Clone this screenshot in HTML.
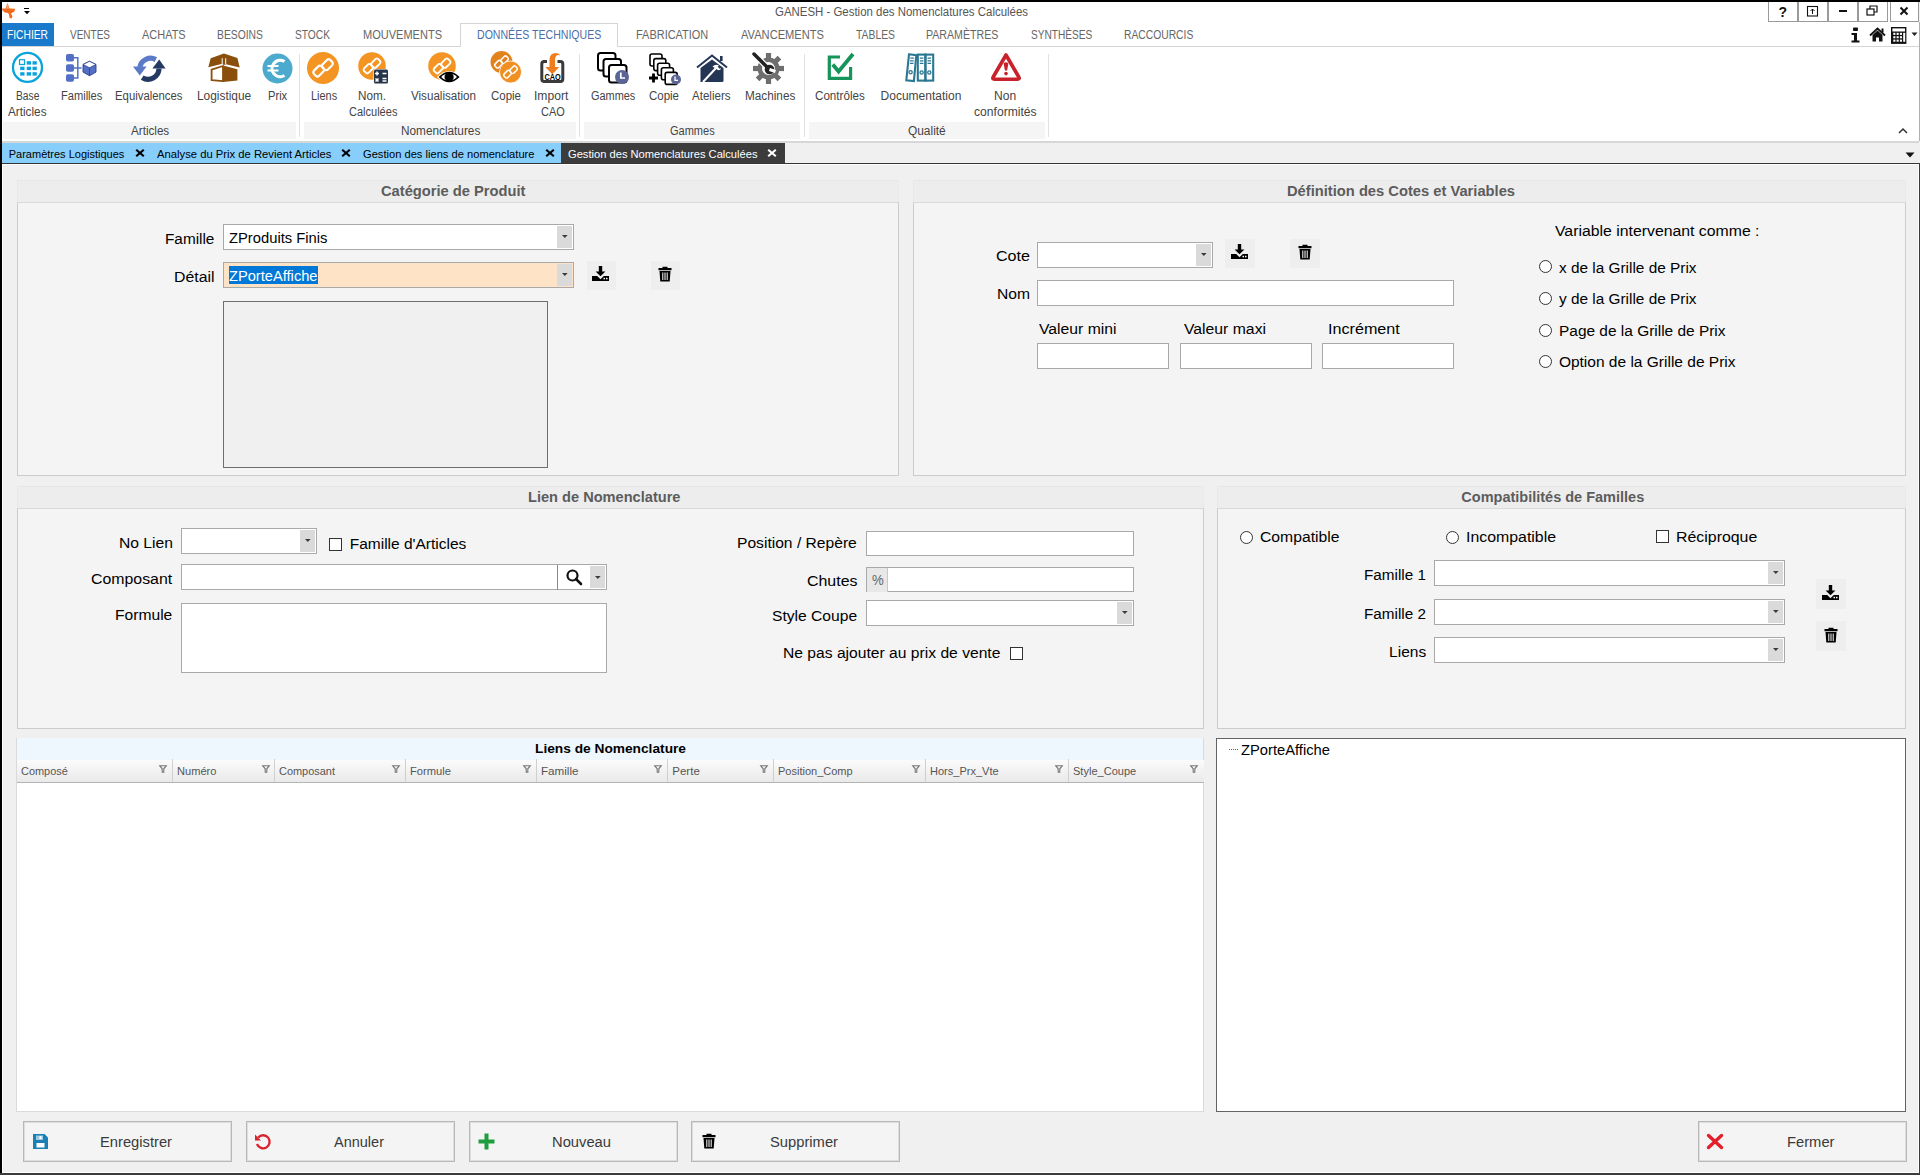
<!DOCTYPE html>
<html><head><meta charset="utf-8">
<style>
*{box-sizing:border-box;margin:0;padding:0}
html,body{width:1920px;height:1175px;overflow:hidden;background:#f0f0f0;font-family:"Liberation Sans",sans-serif;position:relative}
.a{position:absolute}
svg.a{overflow:visible}
.t{position:absolute;white-space:nowrap;line-height:1;transform-origin:0 0}
</style></head><body>
<div class="a" style="left:0px;top:0px;width:1920px;height:2px;background:#000"></div>
<div class="a" style="left:0px;top:0px;width:2px;height:1175px;background:#000"></div>
<div class="a" style="left:2px;top:2px;width:1917px;height:139px;background:#fff"></div>
<svg class="a" style="left:2px;top:3px" width="14" height="16" viewBox="0 0 14 16"><path d="M5.5 0L7.5 5.5L13 5.8L12.5 8.5L9 10.2L10.5 13.5L9.5 15.5L7.5 15L7 11.5L6 10L3 9.5L0.5 7.5L0 5.5L3.5 5.5z" fill="#f26a1b"/><path d="M5.5 0.3L7 5.5L4 5.5z" fill="#f5a877"/></svg>
<div class="a" style="left:24px;top:8px;width:5px;height:1.3px;background:#000"></div>
<svg class="a" style="left:23.5px;top:10.8px" width="6" height="3.5" viewBox="0 0 6 3.5"><path d="M0 0h6L3 3.3z" fill="#000"/></svg>
<div class="t" style="left:775.00px;top:5.54px;font-size:12px;color:#555;font-weight:normal;letter-spacing:0px;transform:scaleX(0.9531);">GANESH - Gestion des Nomenclatures Calculées</div>
<div class="a" style="left:1768px;top:2px;width:30px;height:20px;border:1px solid #9a9a9a;border-top:none;background:#fff"></div>
<div class="a" style="left:1798px;top:2px;width:30px;height:20px;border:1px solid #9a9a9a;border-top:none;background:#fff"></div>
<div class="a" style="left:1828px;top:2px;width:30px;height:20px;border:1px solid #9a9a9a;border-top:none;background:#fff"></div>
<div class="a" style="left:1858px;top:2px;width:30px;height:20px;border:1px solid #9a9a9a;border-top:none;background:#fff"></div>
<div class="a" style="left:1890px;top:2px;width:29px;height:20px;border:1px solid #9a9a9a;border-top:none;background:#fff"></div>
<div class="t" style="left:1778.50px;top:4.65px;font-size:14px;color:#111;font-weight:bold;letter-spacing:0px;">?</div>
<svg class="a" style="left:1806px;top:5px" width="14" height="13" viewBox="0 0 14 13"><rect x="1.5" y="1.5" width="10" height="9.5" fill="none" stroke="#111" stroke-width="1.1"/><path d="M6.5 9V4M4.5 6l2-2 2 2" fill="none" stroke="#111" stroke-width="1"/></svg>
<div class="a" style="left:1839px;top:10px;width:8px;height:2px;background:#111"></div>
<svg class="a" style="left:1866px;top:5px" width="14" height="12" viewBox="0 0 14 12"><rect x="1" y="4" width="7" height="6" fill="#fff" stroke="#111" stroke-width="1.2"/><path d="M4 4V1h7v6H8" fill="none" stroke="#111" stroke-width="1.2"/></svg>
<svg class="a" style="left:1899px;top:6px" width="10" height="10" viewBox="0 0 10 10"><path d="M1.5 1.5l7 7M8.5 1.5l-7 7" stroke="#111" stroke-width="2"/></svg>
<div class="a" style="left:2px;top:23px;width:52px;height:23px;background:#1979ca"></div>
<div class="t" style="left:7.30px;top:28.64px;font-size:12px;color:#fff;font-weight:normal;letter-spacing:0px;transform:scaleX(0.8542);">FICHIER</div>
<div class="a" style="left:460px;top:23px;width:158px;height:24px;border:1px solid #d5d5d5;border-bottom:none;background:#fff"></div>
<div class="a" style="left:2px;top:46px;width:458px;height:1px;background:#d5d5d5"></div>
<div class="a" style="left:617px;top:46px;width:1302px;height:1px;background:#d5d5d5"></div>
<div class="t" style="left:70.00px;top:28.64px;font-size:12px;color:#666;font-weight:normal;letter-spacing:0px;transform:scaleX(0.8331);">VENTES</div>
<div class="t" style="left:142.30px;top:28.64px;font-size:12px;color:#666;font-weight:normal;letter-spacing:0px;transform:scaleX(0.9143);">ACHATS</div>
<div class="t" style="left:217.30px;top:28.64px;font-size:12px;color:#666;font-weight:normal;letter-spacing:0px;transform:scaleX(0.8621);">BESOINS</div>
<div class="t" style="left:295.00px;top:28.64px;font-size:12px;color:#666;font-weight:normal;letter-spacing:0px;transform:scaleX(0.8511);">STOCK</div>
<div class="t" style="left:363.30px;top:28.64px;font-size:12px;color:#666;font-weight:normal;letter-spacing:0px;transform:scaleX(0.9184);">MOUVEMENTS</div>
<div class="t" style="left:476.70px;top:28.64px;font-size:12px;color:#4a6ea8;font-weight:normal;letter-spacing:0px;transform:scaleX(0.8807);">DONNÉES TECHNIQUES</div>
<div class="t" style="left:636.00px;top:28.64px;font-size:12px;color:#666;font-weight:normal;letter-spacing:0px;transform:scaleX(0.9137);">FABRICATION</div>
<div class="t" style="left:741.00px;top:28.64px;font-size:12px;color:#666;font-weight:normal;letter-spacing:0px;transform:scaleX(0.9266);">AVANCEMENTS</div>
<div class="t" style="left:856.00px;top:28.64px;font-size:12px;color:#666;font-weight:normal;letter-spacing:0px;transform:scaleX(0.8640);">TABLES</div>
<div class="t" style="left:926.00px;top:28.64px;font-size:12px;color:#666;font-weight:normal;letter-spacing:0px;transform:scaleX(0.8839);">PARAMÈTRES</div>
<div class="t" style="left:1031.00px;top:28.64px;font-size:12px;color:#666;font-weight:normal;letter-spacing:0px;transform:scaleX(0.8433);">SYNTHÈSES</div>
<div class="t" style="left:1124.00px;top:28.64px;font-size:12px;color:#666;font-weight:normal;letter-spacing:0px;transform:scaleX(0.8590);">RACCOURCIS</div>
<svg class="a" style="left:1851px;top:27px" width="9" height="16" viewBox="0 0 9 16"><rect x="2" y="0.5" width="5" height="3.5" rx="1" fill="#111"/><path d="M0.5 6h5.5v7.5h2.5v2H0.5v-2h2.5V8H0.5z" fill="#111"/></svg>
<svg class="a" style="left:1869px;top:27px" width="17" height="15" viewBox="0 0 17 15"><path d="M1 8.5L8.5 1.5 16 8.5" fill="none" stroke="#111" stroke-width="1.8"/><path d="M3.5 8v6.5h3.5v-4h3v4h3.5V8L8.5 3.5z" fill="#111"/><rect x="12.5" y="1.5" width="2" height="4" fill="#111"/></svg>
<svg class="a" style="left:1891px;top:27px" width="16" height="17" viewBox="0 0 16 17"><rect x="0.7" y="0.7" width="14" height="15.5" fill="#fff" stroke="#111" stroke-width="1.4"/><rect x="1" y="4.5" width="13.6" height="11.5" fill="#111"/><rect x="2.3" y="5.8" width="2.1" height="2.1" fill="#fff"/><rect x="5.6" y="5.8" width="2.1" height="2.1" fill="#fff"/><rect x="8.899999999999999" y="5.8" width="2.1" height="2.1" fill="#fff"/><rect x="2.3" y="9.2" width="2.1" height="2.1" fill="#fff"/><rect x="5.6" y="9.2" width="2.1" height="2.1" fill="#fff"/><rect x="8.899999999999999" y="9.2" width="2.1" height="2.1" fill="#fff"/><rect x="2.3" y="12.6" width="2.1" height="2.1" fill="#fff"/><rect x="5.6" y="12.6" width="2.1" height="2.1" fill="#fff"/><rect x="8.899999999999999" y="12.6" width="2.1" height="2.1" fill="#fff"/><rect x="12.2" y="5.8" width="2" height="9" fill="#fff"/></svg>
<svg class="a" style="left:1911px;top:32px" width="7" height="5" viewBox="0 0 7 5"><path d="M0.5 0.5h6L3.5 4z" fill="#222"/></svg>
<svg class="a" style="left:12px;top:52px" width="31" height="31" viewBox="0 0 31 31"><circle cx="15.5" cy="15.4" r="14.5" fill="none" stroke="#0aa3dc" stroke-width="2.3"/><rect x="7.5" y="7.7" width="5" height="4.8" fill="none" stroke="#0aa3dc" stroke-width="1.2"/><rect x="14.7" y="9.2" width="4.3" height="3.4" fill="#0aa3dc"/><rect x="20.5" y="9.2" width="4.3" height="3.4" fill="#0aa3dc"/><rect x="8.2" y="14.7" width="4.3" height="3.4" fill="#0aa3dc"/><rect x="14.7" y="14.7" width="4.3" height="3.4" fill="#0aa3dc"/><rect x="20.5" y="14.7" width="4.3" height="3.4" fill="#0aa3dc"/><rect x="8.2" y="20.2" width="4.3" height="3.4" fill="#0aa3dc"/><rect x="14.7" y="20.2" width="4.3" height="3.4" fill="#0aa3dc"/><rect x="20.5" y="20.2" width="4.3" height="3.4" fill="#0aa3dc"/></svg>
<svg class="a" style="left:66px;top:54px" width="31" height="29" viewBox="0 0 31 29"><rect x="0" y="0" width="8" height="7.5" rx="1.8" fill="#5370c6"/><rect x="0" y="10.2" width="8" height="7.5" rx="1.8" fill="#5370c6"/><rect x="0" y="20.2" width="8" height="7.5" rx="1.8" fill="#5370c6"/><path d="M8 3.8h3.8v20.2H8M8 14h7.5" fill="none" stroke="#5370c6" stroke-width="1.5"/><path d="M17 10.5l6.5-3.2 6.5 3.2v7.6l-6.5 3.6-6.5-3.6z" fill="#5370c6" stroke="#2a3f8a" stroke-width="0.9"/><path d="M17 10.5l6.5 3.3 6.5-3.3-6.5-3.2z" fill="#fff" stroke="#2a3f8a" stroke-width="0.8"/><path d="M23.5 13.8v7.9" stroke="#2a3f8a" stroke-width="0.8"/></svg>
<svg class="a" style="left:133px;top:56px" width="34" height="27" viewBox="0 0 34 27"><path d="M22.8 3.6A11 11 0 0 0 6.8 11" fill="none" stroke="#5b7bc8" stroke-width="5.2"/><path d="M0 10.4h13.6L6.8 19.6z" fill="#5b7bc8"/><path d="M9.2 21.6A11 11 0 0 0 26 12.5" fill="none" stroke="#243a63" stroke-width="5.2"/><path d="M19.4 12.6h13.2L26.2 3.4z" fill="#243a63"/></svg>
<svg class="a" style="left:204px;top:50px" width="40" height="36" viewBox="0 0 40 36"><path d="M4.3 17.3L6.7 8.3 19.9 3.4 33.4 8 35.7 17.6 22 14.2 21.5 14.8H19L18.4 13.8z" fill="#8a4f0c"/><path d="M18.2 8.2v6M21.7 8.2v6.2" stroke="#fff" stroke-width="1"/><path d="M7.6 19.6L19 16v15.2L7.6 30.2z" fill="#fff" stroke="#8a4f0c" stroke-width="1.8" stroke-linejoin="round"/><path d="M19 15.5L33.4 19.3v11.3L19 32z" fill="#8a4f0c"/></svg>
<svg class="a" style="left:262px;top:53px" width="31" height="31" viewBox="0 0 31 31"><circle cx="15.5" cy="15.5" r="15" fill="#4baacd"/><path d="M22.5 8.5A8.2 8.2 0 1 0 22.5 22.5" fill="none" stroke="#fff" stroke-width="3.2"/><path d="M5.5 13h11M5.5 17.5h11" stroke="#fff" stroke-width="2"/></svg>
<svg class="a" style="left:307px;top:52px" width="32" height="32" viewBox="0 0 32 32"><circle cx="16" cy="16" r="16" fill="#f39423"/><g transform="translate(16,16) rotate(-45) scale(1.0)"><rect x="-10.6" y="-4.5" width="10.8" height="7.3" rx="2.4" fill="none" stroke="#fff" stroke-width="2.2"/><rect x="0" y="-2.8" width="10.8" height="7.3" rx="2.4" fill="none" stroke="#fff" stroke-width="2.2"/></g></svg>
<svg class="a" style="left:358px;top:52px" width="31" height="32" viewBox="0 0 31 32"><circle cx="14" cy="14" r="13.8" fill="#f39423"/><g transform="translate(14,14) rotate(-45) scale(0.86)"><rect x="-10.6" y="-4.5" width="10.8" height="7.3" rx="2.4" fill="none" stroke="#fff" stroke-width="2.2"/><rect x="0" y="-2.8" width="10.8" height="7.3" rx="2.4" fill="none" stroke="#fff" stroke-width="2.2"/></g><rect x="15.5" y="17" width="15" height="15" rx="1.5" fill="#fff"/><rect x="16" y="17.5" width="14" height="14" rx="1.5" fill="#273449"/><path d="M17 21.5h4M19 19.5v4M24.5 21.5h4M17.5 26.5l3 3M20.5 26.5l-3 3M24.5 26.5h4M24.5 29h4" stroke="#fff" stroke-width="1.5"/></svg>
<svg class="a" style="left:428px;top:52px" width="32" height="32" viewBox="0 0 32 32"><circle cx="14" cy="14" r="13.8" fill="#f39423"/><g transform="translate(14,14) rotate(-45) scale(0.86)"><rect x="-10.6" y="-4.5" width="10.8" height="7.3" rx="2.4" fill="none" stroke="#fff" stroke-width="2.2"/><rect x="0" y="-2.8" width="10.8" height="7.3" rx="2.4" fill="none" stroke="#fff" stroke-width="2.2"/></g><path d="M9 25Q21.1 13 33.2 25Q21.1 37 9 25z" fill="#fff"/><path d="M10.6 25Q21.1 14.5 31.6 25Q21.1 35.5 10.6 25z" fill="#000"/><path d="M13.2 25Q21.1 17.5 29 25Q21.1 32.5 13.2 25z" fill="#fff"/><circle cx="21.1" cy="25" r="4.6" fill="#000"/></svg>
<svg class="a" style="left:490px;top:51px" width="32" height="33" viewBox="0 0 32 33"><circle cx="11.5" cy="11" r="11" fill="#e2841e"/><g transform="translate(11.5,11) rotate(-45) scale(0.7)"><rect x="-10.6" y="-4.5" width="10.8" height="7.3" rx="2.4" fill="none" stroke="#fff" stroke-width="2.2"/><rect x="0" y="-2.8" width="10.8" height="7.3" rx="2.4" fill="none" stroke="#fff" stroke-width="2.2"/></g><circle cx="20.5" cy="21" r="11" fill="#f08f22" stroke="#fff" stroke-width="0.8"/><g transform="translate(20.5,21) rotate(-45) scale(0.7)"><rect x="-10.6" y="-4.5" width="10.8" height="7.3" rx="2.4" fill="none" stroke="#fff" stroke-width="2.2"/><rect x="0" y="-2.8" width="10.8" height="7.3" rx="2.4" fill="none" stroke="#fff" stroke-width="2.2"/></g></svg>
<svg class="a" style="left:538px;top:52px" width="28" height="33" viewBox="0 0 28 33"><path d="M9 9.5H6.3Q3.8 9.5 3.8 12v15q0 2.5 2.5 2.5h16q2.5 0 2.5-2.5V12q0-2.5-2.5-2.5H19.5" fill="none" stroke="#3a3a3a" stroke-width="3"/><path d="M11.5 15V8Q11.5 1 18 1Q21 1 22.5 3.5Q20.5 2.5 18.5 3.5Q17 4.5 17 8V15h4.2L14.3 22.2 7.3 15z" fill="#f07d1e"/><text x="14.6" y="28.2" font-family="Liberation Sans" font-weight="bold" font-size="8.6" text-anchor="middle" fill="#000" textLength="16.3" lengthAdjust="spacingAndGlyphs">CAO</text></svg>
<svg class="a" style="left:597px;top:52px" width="33" height="33" viewBox="0 0 33 33"><rect x="1.0" y="1" width="17.5" height="17.5" rx="2.5" fill="#fff" stroke="#000" stroke-width="2"/><rect x="6.5" y="7" width="17.5" height="17.5" rx="2.5" fill="#fff" stroke="#000" stroke-width="2"/><rect x="12.0" y="13" width="17.5" height="17.5" rx="2.5" fill="#fff" stroke="#000" stroke-width="2"/><circle cx="25" cy="25" r="7" fill="#5a6596"/><path d="M23.8 20.5v5.5h4.2" fill="none" stroke="#fff" stroke-width="1.7"/></svg>
<svg class="a" style="left:649px;top:53px" width="33" height="31" viewBox="0 0 33 31"><rect x="1.0" y="1.0" width="12" height="12" rx="2" fill="#fff" stroke="#000" stroke-width="1.6"/><rect x="4.8" y="5.6" width="12" height="12" rx="2" fill="#fff" stroke="#000" stroke-width="1.6"/><rect x="8.6" y="10.2" width="12" height="12" rx="2" fill="#fff" stroke="#000" stroke-width="1.6"/><rect x="12.399999999999999" y="14.799999999999999" width="12" height="12" rx="2" fill="#fff" stroke="#000" stroke-width="1.6"/><rect x="16.2" y="19.4" width="12" height="12" rx="2" fill="#fff" stroke="#000" stroke-width="1.6"/><circle cx="27" cy="26.5" r="5" fill="#5a6596"/><path d="M26 23.5v3.8h3" fill="none" stroke="#fff" stroke-width="1.3"/><path d="M4.5 20.5v9M0 25h9" stroke="#000" stroke-width="2.8"/></svg>
<svg class="a" style="left:696px;top:54px" width="32" height="28" viewBox="0 0 32 28"><path d="M1 13.5L16 1.5 31 13.5" fill="none" stroke="#253654" stroke-width="2"/><rect x="24" y="2" width="2.6" height="5" fill="#253654"/><path d="M4.5 14L16 5.5 27.5 14v12.5q0 1.5-1.5 1.5H4.5z" fill="#253654"/><path d="M7 28L20 14" stroke="#fff" stroke-width="2"/><path d="M16.5 12.5q3-3 6.5-1l-1.3 1.3 2 2 1.5-1q-0.5 2.5-3 2.5" fill="#fff"/></svg>
<svg class="a" style="left:751px;top:51px" width="35" height="35" viewBox="0 0 35 35"><g transform="translate(17.5,17.5)"><rect x="-2.6" y="-15.5" width="5.2" height="6" fill="#6e6e6e" transform="rotate(0)"/><rect x="-2.6" y="-15.5" width="5.2" height="6" fill="#6e6e6e" transform="rotate(45)"/><rect x="-2.6" y="-15.5" width="5.2" height="6" fill="#6e6e6e" transform="rotate(90)"/><rect x="-2.6" y="-15.5" width="5.2" height="6" fill="#6e6e6e" transform="rotate(135)"/><rect x="-2.6" y="-15.5" width="5.2" height="6" fill="#6e6e6e" transform="rotate(180)"/><rect x="-2.6" y="-15.5" width="5.2" height="6" fill="#6e6e6e" transform="rotate(225)"/><rect x="-2.6" y="-15.5" width="5.2" height="6" fill="#6e6e6e" transform="rotate(270)"/><rect x="-2.6" y="-15.5" width="5.2" height="6" fill="#6e6e6e" transform="rotate(315)"/><circle r="11" fill="#6e6e6e"/><circle r="6.5" fill="#fff"/></g><path d="M3 3L17.5 17.5" stroke="#fff" stroke-width="6"/><path d="M3 3L16.5 16.5" stroke="#222" stroke-width="3.5" stroke-linecap="round"/><circle cx="18.5" cy="18.5" r="4.8" fill="#222"/><path d="M18.5 18.5l6 2" stroke="#fff" stroke-width="3"/></svg>
<svg class="a" style="left:827px;top:53px" width="28" height="29" viewBox="0 0 28 29"><path d="M13 4H2.3v21.3h21.3V14" fill="none" stroke="#16955a" stroke-width="3.2"/><path d="M5.8 11.5l5.8 7L26 1" fill="none" stroke="#16955a" stroke-width="3.8"/></svg>
<svg class="a" style="left:905px;top:53px" width="32" height="30" viewBox="0 0 32 30"><g fill="none" stroke="#2a7792" stroke-width="2.1"><path d="M4 1.3l7.3 0.9-2.4 25.8L1.3 27.2z"/><rect x="12.8" y="1.6" width="7.6" height="26"/><rect x="20.4" y="1.6" width="7.8" height="26"/></g><g stroke="#2a7792" stroke-width="1.3"><path d="M5.3 5.2h3.6M5.1 7.8h3.6M4.9 10.4h3.6M14.8 5.2h3.6M14.8 7.8h3.6M14.8 10.4h3.6M22.5 5.2h3.6M22.5 7.8h3.6M22.5 10.4h3.6"/></g><g fill="none" stroke="#2a7792" stroke-width="1.3"><circle cx="5.6" cy="19.2" r="1.6"/><circle cx="16.6" cy="19.5" r="1.6"/><circle cx="24.3" cy="19.5" r="1.6"/></g></svg>
<svg class="a" style="left:991px;top:52px" width="31" height="31" viewBox="0 0 31 31"><path d="M15 3L27.8 25q1.2 2.2-1.3 2.2H3.5q-2.5 0-1.3-2.2z" fill="none" stroke="#c8222a" stroke-width="3.6" stroke-linejoin="round"/><path d="M12.6 11.5q2.4-2.5 4.8 0l-1.3 7h-2.2z" fill="#c8222a"/><circle cx="15" cy="21.6" r="1.8" fill="#c8222a"/></svg>
<div class="t" style="left:16.40px;top:90.04px;font-size:12px;color:#444;font-weight:normal;letter-spacing:0px;transform:scaleX(0.8553);">Base</div>
<div class="t" style="left:8.30px;top:106.24px;font-size:12px;color:#444;font-weight:normal;letter-spacing:0px;transform:scaleX(0.9786);">Articles</div>
<div class="t" style="left:60.60px;top:90.04px;font-size:12px;color:#444;font-weight:normal;letter-spacing:0px;transform:scaleX(0.9245);">Familles</div>
<div class="t" style="left:115.30px;top:90.04px;font-size:12px;color:#444;font-weight:normal;letter-spacing:0px;transform:scaleX(0.9455);">Equivalences</div>
<div class="t" style="left:196.60px;top:90.04px;font-size:12px;color:#444;font-weight:normal;letter-spacing:0px;transform:scaleX(0.9905);">Logistique</div>
<div class="t" style="left:267.50px;top:90.04px;font-size:12px;color:#444;font-weight:normal;letter-spacing:0px;transform:scaleX(0.9288);">Prix</div>
<div class="t" style="left:310.90px;top:90.04px;font-size:12px;color:#444;font-weight:normal;letter-spacing:0px;transform:scaleX(0.9098);">Liens</div>
<div class="t" style="left:358.40px;top:90.04px;font-size:12px;color:#444;font-weight:normal;letter-spacing:0px;transform:scaleX(0.9766);">Nom.</div>
<div class="t" style="left:348.60px;top:106.24px;font-size:12px;color:#444;font-weight:normal;letter-spacing:0px;transform:scaleX(0.9184);">Calculées</div>
<div class="t" style="left:411.30px;top:90.04px;font-size:12px;color:#444;font-weight:normal;letter-spacing:0px;transform:scaleX(0.9679);">Visualisation</div>
<div class="t" style="left:491.00px;top:90.04px;font-size:12px;color:#444;font-weight:normal;letter-spacing:0px;transform:scaleX(0.9567);">Copie</div>
<div class="t" style="left:534.40px;top:90.04px;font-size:12px;color:#444;font-weight:normal;letter-spacing:0px;transform:scaleX(1.0084);">Import</div>
<div class="t" style="left:540.50px;top:106.24px;font-size:12px;color:#444;font-weight:normal;letter-spacing:0px;transform:scaleX(0.9110);">CAO</div>
<div class="t" style="left:591.40px;top:90.04px;font-size:12px;color:#444;font-weight:normal;letter-spacing:0px;transform:scaleX(0.9099);">Gammes</div>
<div class="t" style="left:649.20px;top:90.04px;font-size:12px;color:#444;font-weight:normal;letter-spacing:0px;transform:scaleX(0.9567);">Copie</div>
<div class="t" style="left:692.30px;top:90.04px;font-size:12px;color:#444;font-weight:normal;letter-spacing:0px;transform:scaleX(0.9646);">Ateliers</div>
<div class="t" style="left:744.70px;top:90.04px;font-size:12px;color:#444;font-weight:normal;letter-spacing:0px;transform:scaleX(0.9794);">Machines</div>
<div class="t" style="left:815.20px;top:90.04px;font-size:12px;color:#444;font-weight:normal;letter-spacing:0px;transform:scaleX(0.9696);">Contrôles</div>
<div class="t" style="left:880.60px;top:90.04px;font-size:12px;color:#444;font-weight:normal;letter-spacing:0px;">Documentation</div>
<div class="t" style="left:994.30px;top:90.04px;font-size:12px;color:#444;font-weight:normal;letter-spacing:0px;transform:scaleX(1.0038);">Non</div>
<div class="t" style="left:974.40px;top:106.24px;font-size:12px;color:#444;font-weight:normal;letter-spacing:0px;transform:scaleX(1.0092);">conformités</div>
<div class="a" style="left:3px;top:122px;width:293px;height:17px;background:#f5f5f5"></div>
<div class="a" style="left:304px;top:122px;width:272px;height:17px;background:#f5f5f5"></div>
<div class="a" style="left:584px;top:122px;width:216px;height:17px;background:#f5f5f5"></div>
<div class="a" style="left:809px;top:122px;width:236px;height:17px;background:#f5f5f5"></div>
<div class="t" style="left:130.50px;top:124.64px;font-size:12px;color:#444;font-weight:normal;letter-spacing:0px;transform:scaleX(0.9709);">Articles</div>
<div class="t" style="left:400.70px;top:124.64px;font-size:12px;color:#444;font-weight:normal;letter-spacing:0px;transform:scaleX(0.9826);">Nomenclatures</div>
<div class="t" style="left:670.40px;top:124.64px;font-size:12px;color:#444;font-weight:normal;letter-spacing:0px;transform:scaleX(0.9181);">Gammes</div>
<div class="t" style="left:908.30px;top:124.64px;font-size:12px;color:#444;font-weight:normal;letter-spacing:0px;transform:scaleX(0.9913);">Qualité</div>
<div class="a" style="left:299px;top:54px;width:1px;height:83px;background:#e2e2e2"></div>
<div class="a" style="left:579px;top:54px;width:1px;height:83px;background:#e2e2e2"></div>
<div class="a" style="left:804px;top:54px;width:1px;height:83px;background:#e2e2e2"></div>
<div class="a" style="left:1048px;top:54px;width:1px;height:83px;background:#e2e2e2"></div>
<svg class="a" style="left:1898px;top:127px" width="10" height="7" viewBox="0 0 10 7"><path d="M1 6L5 2 9 6" fill="none" stroke="#333" stroke-width="1.5"/></svg>
<div class="a" style="left:2px;top:141px;width:1917px;height:2px;background:#d7d7d7"></div>
<div class="a" style="left:2px;top:143px;width:559px;height:20px;background:#87cefa"></div>
<div class="a" style="left:561px;top:143px;width:224px;height:20px;background:#3c3c3c"></div>
<div class="a" style="left:785px;top:143px;width:1134px;height:20px;background:#f0f0f0"></div>
<div class="a" style="left:2px;top:163px;width:1917px;height:1px;background:#353535"></div>
<div class="a" style="left:2px;top:164px;width:1917px;height:1px;background:#fff"></div>
<div class="t" style="left:8.75px;top:149.19px;font-size:11px;color:#000;font-weight:normal;letter-spacing:0px;">Paramètres Logistiques</div>
<svg class="a" style="left:134.5px;top:149px" width="10" height="8" viewBox="0 0 10 8"><path d="M1.2 0.8l7.6 6.4M8.8 0.8L1.2 7.2" stroke="#000" stroke-width="2.1"/></svg>
<div class="t" style="left:157.00px;top:149.19px;font-size:11px;color:#000;font-weight:normal;letter-spacing:0px;transform:scaleX(1.0229);">Analyse du Prix de Revient Articles</div>
<svg class="a" style="left:340.5px;top:149px" width="10" height="8" viewBox="0 0 10 8"><path d="M1.2 0.8l7.6 6.4M8.8 0.8L1.2 7.2" stroke="#000" stroke-width="2.1"/></svg>
<div class="t" style="left:363.00px;top:149.19px;font-size:11px;color:#000;font-weight:normal;letter-spacing:0px;transform:scaleX(1.0125);">Gestion des liens de nomenclature</div>
<svg class="a" style="left:544.5px;top:149px" width="10" height="8" viewBox="0 0 10 8"><path d="M1.2 0.8l7.6 6.4M8.8 0.8L1.2 7.2" stroke="#000" stroke-width="2.1"/></svg>
<div class="t" style="left:567.50px;top:149.19px;font-size:11px;color:#fff;font-weight:normal;letter-spacing:0px;transform:scaleX(1.0129);">Gestion des Nomenclatures Calculées</div>
<svg class="a" style="left:767px;top:149px" width="10" height="8" viewBox="0 0 10 8"><path d="M1.2 0.8l7.6 6.4M8.8 0.8L1.2 7.2" stroke="#fff" stroke-width="2.1"/></svg>
<svg class="a" style="left:1905px;top:152px" width="10" height="6" viewBox="0 0 10 6"><path d="M0.5 0.5h9L5 5.5z" fill="#111"/></svg>
<div class="a" style="left:17px;top:180px;width:882px;height:23px;background:#ededed;border-top:1px dotted #e0e0e0;border-bottom:1px dotted #cfcfcf;border-left:1px dotted #e4e4e4;border-right:1px dotted #e4e4e4"></div>
<div class="a" style="left:17px;top:202px;width:882px;height:274px;background:#f4f4f4;border:1px solid #cccccc;border-top:1px solid #d9d9d9"></div>
<div class="t" style="left:380.60px;top:183.73px;font-size:14.5px;color:#5c5c5c;font-weight:bold;letter-spacing:0px;transform:scaleX(1.0126);">Catégorie de Produit</div>
<div class="t" style="left:165.40px;top:230.63px;font-size:15.5px;color:#000;font-weight:normal;letter-spacing:0px;transform:scaleX(0.9889);">Famille</div>
<div class="a" style="left:223px;top:224px;width:351px;height:26px;background:#fff;border:1px solid #a9a9a9"></div>
<div class="a" style="left:557px;top:226px;width:15px;height:22px;background:#dadada"></div>
<svg class="a" style="left:562px;top:235px" width="6" height="3" viewBox="0 0 6 3"><path d="M0 0h5.6L2.8 3z" fill="#3a3a3a"/></svg>
<div class="t" style="left:229.20px;top:229.58px;font-size:15.5px;color:#000;font-weight:normal;letter-spacing:0px;transform:scaleX(0.9528);">ZProduits Finis</div>
<div class="t" style="left:174.10px;top:269.38px;font-size:15.5px;color:#000;font-weight:normal;letter-spacing:0px;transform:scaleX(1.0217);">Détail</div>
<div class="a" style="left:223px;top:262px;width:351px;height:26px;background:#fee3c7;border:1px solid #a9a9a9"></div>
<div class="a" style="left:557px;top:264px;width:15px;height:22px;background:#dadada"></div>
<svg class="a" style="left:562px;top:273px" width="6" height="3" viewBox="0 0 6 3"><path d="M0 0h5.6L2.8 3z" fill="#3a3a3a"/></svg>
<div class="a" style="left:229px;top:266px;width:89px;height:18px;background:#0078d7"></div>
<div class="t" style="left:229.20px;top:268.18px;font-size:15.5px;color:#fff;font-weight:normal;letter-spacing:0px;transform:scaleX(0.9453);">ZPorteAffiche</div>
<div class="a" style="left:587px;top:261px;width:29px;height:29px;background:#eeeeee"></div>
<svg class="a" style="left:592px;top:266px" width="17" height="15" viewBox="0 0 17 15"><path d="M6.8 0h3.4v5.5h3.2L8.5 10.3 3.6 5.5h3.2z" fill="#000"/><path d="M0 10h5.2l3.3 3.2 3.3-3.2H17v5H0z" fill="#000"/><rect x="11.5" y="11.8" width="1.5" height="1.5" fill="#fff"/><rect x="14" y="11.8" width="1.5" height="1.5" fill="#fff"/></svg>
<div class="a" style="left:651px;top:261px;width:29px;height:29px;background:#eeeeee"></div>
<svg class="a" style="left:658px;top:266px" width="14" height="16" viewBox="0 0 14 16"><path d="M4.5 2V0.8h5V2H13.5v2.2H0.5V2z" fill="#000"/><path d="M1.5 5h11l-0.8 10.5H2.3z" fill="#000"/><path d="M4.8 6.5v7.5M7 6.5v7.5M9.2 6.5v7.5" stroke="#fff" stroke-width="1"/></svg>
<div class="a" style="left:223px;top:301px;width:325px;height:167px;background:#f0f0f0;border:1px solid #6e6e6e"></div>
<div class="a" style="left:913px;top:180px;width:993px;height:23px;background:#ededed;border-top:1px dotted #e0e0e0;border-bottom:1px dotted #cfcfcf;border-left:1px dotted #e4e4e4;border-right:1px dotted #e4e4e4"></div>
<div class="a" style="left:913px;top:202px;width:993px;height:274px;background:#f4f4f4;border:1px solid #cccccc;border-top:1px solid #d9d9d9"></div>
<div class="t" style="left:1286.80px;top:183.73px;font-size:14.5px;color:#5c5c5c;font-weight:bold;letter-spacing:0px;transform:scaleX(1.0141);">Définition des Cotes et Variables</div>
<div class="t" style="left:995.60px;top:248.28px;font-size:15.5px;color:#000;font-weight:normal;letter-spacing:0px;transform:scaleX(1.0382);">Cote</div>
<div class="a" style="left:1037px;top:242px;width:176px;height:26px;background:#fff;border:1px solid #a9a9a9"></div>
<div class="a" style="left:1196px;top:244px;width:15px;height:22px;background:#dadada"></div>
<svg class="a" style="left:1201px;top:253px" width="6" height="3" viewBox="0 0 6 3"><path d="M0 0h5.6L2.8 3z" fill="#3a3a3a"/></svg>
<div class="a" style="left:1225px;top:239px;width:30px;height:29px;background:#eeeeee"></div>
<svg class="a" style="left:1231px;top:244px" width="17" height="15" viewBox="0 0 17 15"><path d="M6.8 0h3.4v5.5h3.2L8.5 10.3 3.6 5.5h3.2z" fill="#000"/><path d="M0 10h5.2l3.3 3.2 3.3-3.2H17v5H0z" fill="#000"/><rect x="11.5" y="11.8" width="1.5" height="1.5" fill="#fff"/><rect x="14" y="11.8" width="1.5" height="1.5" fill="#fff"/></svg>
<div class="a" style="left:1290px;top:239px;width:30px;height:29px;background:#eeeeee"></div>
<svg class="a" style="left:1298px;top:244px" width="14" height="16" viewBox="0 0 14 16"><path d="M4.5 2V0.8h5V2H13.5v2.2H0.5V2z" fill="#000"/><path d="M1.5 5h11l-0.8 10.5H2.3z" fill="#000"/><path d="M4.8 6.5v7.5M7 6.5v7.5M9.2 6.5v7.5" stroke="#fff" stroke-width="1"/></svg>
<div class="t" style="left:996.60px;top:285.88px;font-size:15.5px;color:#000;font-weight:normal;letter-spacing:0px;transform:scaleX(1.0081);">Nom</div>
<div class="a" style="left:1037px;top:280px;width:417px;height:26px;background:#fff;border:1px solid #a9a9a9"></div>
<div class="t" style="left:1039.20px;top:320.58px;font-size:15.5px;color:#000;font-weight:normal;letter-spacing:0px;transform:scaleX(1.0145);">Valeur mini</div>
<div class="t" style="left:1184.30px;top:320.58px;font-size:15.5px;color:#000;font-weight:normal;letter-spacing:0px;transform:scaleX(1.0163);">Valeur maxi</div>
<div class="t" style="left:1328.30px;top:320.58px;font-size:15.5px;color:#000;font-weight:normal;letter-spacing:0px;transform:scaleX(1.0418);">Incrément</div>
<div class="a" style="left:1037px;top:343px;width:132px;height:26px;background:#fff;border:1px solid #a9a9a9"></div>
<div class="a" style="left:1180px;top:343px;width:132px;height:26px;background:#fff;border:1px solid #a9a9a9"></div>
<div class="a" style="left:1322px;top:343px;width:132px;height:26px;background:#fff;border:1px solid #a9a9a9"></div>
<div class="t" style="left:1555.20px;top:223.28px;font-size:15.5px;color:#000;font-weight:normal;letter-spacing:0px;transform:scaleX(1.0202);">Variable intervenant comme :</div>
<div class="a" style="left:1539.1px;top:260.2px;width:13.0px;height:13.0px;border:1px solid #333;border-radius:50%;background:#fff"></div>
<div class="t" style="left:1558.90px;top:259.58px;font-size:15.5px;color:#000;font-weight:normal;letter-spacing:0px;transform:scaleX(0.9913);">x de la Grille de Prix</div>
<div class="a" style="left:1539.1px;top:292.1px;width:13.0px;height:13.0px;border:1px solid #333;border-radius:50%;background:#fff"></div>
<div class="t" style="left:1558.90px;top:291.48px;font-size:15.5px;color:#000;font-weight:normal;letter-spacing:0px;transform:scaleX(0.9913);">y de la Grille de Prix</div>
<div class="a" style="left:1539.1px;top:324.0px;width:13.0px;height:13.0px;border:1px solid #333;border-radius:50%;background:#fff"></div>
<div class="t" style="left:1558.90px;top:323.38px;font-size:15.5px;color:#000;font-weight:normal;letter-spacing:0px;transform:scaleX(0.9962);">Page de la Grille de Prix</div>
<div class="a" style="left:1539.1px;top:354.8px;width:13.0px;height:13.0px;border:1px solid #333;border-radius:50%;background:#fff"></div>
<div class="t" style="left:1558.90px;top:354.18px;font-size:15.5px;color:#000;font-weight:normal;letter-spacing:0px;">Option de la Grille de Prix</div>
<div class="a" style="left:17px;top:486px;width:1187px;height:23px;background:#ededed;border-top:1px dotted #e0e0e0;border-bottom:1px dotted #cfcfcf;border-left:1px dotted #e4e4e4;border-right:1px dotted #e4e4e4"></div>
<div class="a" style="left:17px;top:508px;width:1187px;height:221px;background:#f4f4f4;border:1px solid #cccccc;border-top:1px solid #d9d9d9"></div>
<div class="t" style="left:528.00px;top:489.73px;font-size:14.5px;color:#5c5c5c;font-weight:bold;letter-spacing:0px;transform:scaleX(1.0067);">Lien de Nomenclature</div>
<div class="t" style="left:118.60px;top:534.88px;font-size:15.5px;color:#000;font-weight:normal;letter-spacing:0px;transform:scaleX(1.0105);">No Lien</div>
<div class="a" style="left:181px;top:528px;width:136px;height:26px;background:#fff;border:1px solid #a9a9a9"></div>
<div class="a" style="left:300px;top:530px;width:15px;height:22px;background:#dadada"></div>
<svg class="a" style="left:305px;top:539px" width="6" height="3" viewBox="0 0 6 3"><path d="M0 0h5.6L2.8 3z" fill="#3a3a3a"/></svg>
<div class="a" style="left:329px;top:538px;width:13px;height:13px;background:#fff;border:1px solid #333"></div>
<div class="t" style="left:349.70px;top:536.18px;font-size:15.5px;color:#000;font-weight:normal;letter-spacing:0px;">Famille d'Articles</div>
<div class="t" style="left:91.40px;top:570.88px;font-size:15.5px;color:#000;font-weight:normal;letter-spacing:0px;transform:scaleX(1.0244);">Composant</div>
<div class="a" style="left:181px;top:564px;width:426px;height:26px;background:#fff;border:1px solid #a9a9a9"></div>
<div class="a" style="left:557px;top:565px;width:1px;height:25px;background:#8a8a8a"></div>
<svg class="a" style="left:565.5px;top:569px" width="17" height="16" viewBox="0 0 17 16"><circle cx="6.5" cy="6.5" r="5" fill="none" stroke="#111" stroke-width="2.2"/><path d="M10 10l5 5" stroke="#111" stroke-width="2.6" stroke-linecap="round"/></svg>
<div class="a" style="left:590px;top:566px;width:15px;height:22px;background:#dadada"></div>
<svg class="a" style="left:594.5px;top:576px" width="6" height="3" viewBox="0 0 6 3"><path d="M0 0h5.6L2.8 3z" fill="#3a3a3a"/></svg>
<div class="t" style="left:115.30px;top:607.38px;font-size:15.5px;color:#000;font-weight:normal;letter-spacing:0px;transform:scaleX(1.0077);">Formule</div>
<div class="a" style="left:181px;top:603px;width:426px;height:70px;background:#fff;border:1px solid #a9a9a9"></div>
<div class="t" style="left:737.20px;top:534.88px;font-size:15.5px;color:#000;font-weight:normal;letter-spacing:0px;transform:scaleX(1.0075);">Position / Repère</div>
<div class="a" style="left:866px;top:531px;width:268px;height:25px;background:#fff;border:1px solid #a9a9a9"></div>
<div class="t" style="left:806.50px;top:572.78px;font-size:15.5px;color:#000;font-weight:normal;letter-spacing:0px;transform:scaleX(1.0280);">Chutes</div>
<div class="a" style="left:866px;top:567px;width:268px;height:25px;background:#fff;border:1px solid #a9a9a9"></div>
<div class="a" style="left:867px;top:568px;width:21px;height:24px;background:#e8e8e8"></div>
<div class="a" style="left:887px;top:568px;width:1px;height:24px;background:#c8c8c8"></div>
<div class="t" style="left:872.00px;top:573.15px;font-size:14px;color:#666;font-weight:normal;letter-spacing:0px;transform:scaleX(0.9395);">%</div>
<div class="t" style="left:771.90px;top:607.68px;font-size:15.5px;color:#000;font-weight:normal;letter-spacing:0px;transform:scaleX(1.0077);">Style Coupe</div>
<div class="a" style="left:866px;top:600px;width:268px;height:26px;background:#fff;border:1px solid #a9a9a9"></div>
<div class="a" style="left:1117px;top:602px;width:15px;height:22px;background:#dadada"></div>
<svg class="a" style="left:1122px;top:611px" width="6" height="3" viewBox="0 0 6 3"><path d="M0 0h5.6L2.8 3z" fill="#3a3a3a"/></svg>
<div class="t" style="left:783.20px;top:645.18px;font-size:15.5px;color:#000;font-weight:normal;letter-spacing:0px;transform:scaleX(1.0092);">Ne pas ajouter au prix de vente</div>
<div class="a" style="left:1010px;top:647px;width:13px;height:13px;background:#fff;border:1px solid #333"></div>
<div class="a" style="left:1217px;top:486px;width:689px;height:23px;background:#ededed;border-top:1px dotted #e0e0e0;border-bottom:1px dotted #cfcfcf;border-left:1px dotted #e4e4e4;border-right:1px dotted #e4e4e4"></div>
<div class="a" style="left:1217px;top:508px;width:689px;height:221px;background:#f4f4f4;border:1px solid #cccccc;border-top:1px solid #d9d9d9"></div>
<div class="t" style="left:1461.30px;top:489.73px;font-size:14.5px;color:#5c5c5c;font-weight:bold;letter-spacing:0px;">Compatibilités de Familles</div>
<div class="a" style="left:1239.6px;top:530.5px;width:13.0px;height:13.0px;border:1px solid #333;border-radius:50%;background:#fff"></div>
<div class="t" style="left:1260.00px;top:529.38px;font-size:15.5px;color:#000;font-weight:normal;letter-spacing:0px;transform:scaleX(1.0139);">Compatible</div>
<div class="a" style="left:1445.8px;top:530.5px;width:13.0px;height:13.0px;border:1px solid #333;border-radius:50%;background:#fff"></div>
<div class="t" style="left:1466.20px;top:529.38px;font-size:15.5px;color:#000;font-weight:normal;letter-spacing:0px;transform:scaleX(1.0240);">Incompatible</div>
<div class="a" style="left:1656px;top:530px;width:13px;height:13px;background:#fff;border:1px solid #333"></div>
<div class="t" style="left:1676.20px;top:528.88px;font-size:15.5px;color:#000;font-weight:normal;letter-spacing:0px;transform:scaleX(1.0255);">Réciproque</div>
<div class="t" style="left:1364.20px;top:567.38px;font-size:15.5px;color:#000;font-weight:normal;letter-spacing:0px;transform:scaleX(0.9842);">Famille 1</div>
<div class="a" style="left:1434px;top:560px;width:351px;height:26px;background:#fff;border:1px solid #a9a9a9"></div>
<div class="a" style="left:1768px;top:562px;width:15px;height:22px;background:#dadada"></div>
<svg class="a" style="left:1773px;top:571px" width="6" height="3" viewBox="0 0 6 3"><path d="M0 0h5.6L2.8 3z" fill="#3a3a3a"/></svg>
<div class="t" style="left:1364.20px;top:606.38px;font-size:15.5px;color:#000;font-weight:normal;letter-spacing:0px;transform:scaleX(0.9842);">Famille 2</div>
<div class="a" style="left:1434px;top:599px;width:351px;height:26px;background:#fff;border:1px solid #a9a9a9"></div>
<div class="a" style="left:1768px;top:601px;width:15px;height:22px;background:#dadada"></div>
<svg class="a" style="left:1773px;top:610px" width="6" height="3" viewBox="0 0 6 3"><path d="M0 0h5.6L2.8 3z" fill="#3a3a3a"/></svg>
<div class="t" style="left:1389.10px;top:644.28px;font-size:15.5px;color:#000;font-weight:normal;letter-spacing:0px;">Liens</div>
<div class="a" style="left:1434px;top:637px;width:351px;height:26px;background:#fff;border:1px solid #a9a9a9"></div>
<div class="a" style="left:1768px;top:639px;width:15px;height:22px;background:#dadada"></div>
<svg class="a" style="left:1773px;top:648px" width="6" height="3" viewBox="0 0 6 3"><path d="M0 0h5.6L2.8 3z" fill="#3a3a3a"/></svg>
<div class="a" style="left:1816px;top:579px;width:30px;height:30px;background:#eeeeee"></div>
<svg class="a" style="left:1822px;top:585px" width="17" height="15" viewBox="0 0 17 15"><path d="M6.8 0h3.4v5.5h3.2L8.5 10.3 3.6 5.5h3.2z" fill="#000"/><path d="M0 10h5.2l3.3 3.2 3.3-3.2H17v5H0z" fill="#000"/><rect x="11.5" y="11.8" width="1.5" height="1.5" fill="#fff"/><rect x="14" y="11.8" width="1.5" height="1.5" fill="#fff"/></svg>
<div class="a" style="left:1816px;top:621px;width:30px;height:30px;background:#eeeeee"></div>
<svg class="a" style="left:1824px;top:627px" width="14" height="16" viewBox="0 0 14 16"><path d="M4.5 2V0.8h5V2H13.5v2.2H0.5V2z" fill="#000"/><path d="M1.5 5h11l-0.8 10.5H2.3z" fill="#000"/><path d="M4.8 6.5v7.5M7 6.5v7.5M9.2 6.5v7.5" stroke="#fff" stroke-width="1"/></svg>
<div class="a" style="left:16px;top:738px;width:1188px;height:374px;background:#fff;border:1px solid #dadada"></div>
<div class="a" style="left:17px;top:738px;width:1186px;height:22px;background:#eef7fe"></div>
<div class="t" style="left:534.50px;top:741.70px;font-size:13px;color:#000;font-weight:bold;letter-spacing:0px;transform:scaleX(1.0556);">Liens de Nomenclature</div>
<div class="a" style="left:17px;top:760px;width:1187px;height:23px;background:linear-gradient(#fbfbfb,#e9e9e9);border-bottom:1px solid #b5b5b5"></div>
<div class="t" style="left:21.00px;top:765.77px;font-size:11.5px;color:#555;font-weight:normal;letter-spacing:0px;transform:scaleX(0.9509);">Composé</div>
<div class="t" style="left:177.00px;top:765.77px;font-size:11.5px;color:#555;font-weight:normal;letter-spacing:0px;transform:scaleX(0.9656);">Numéro</div>
<div class="t" style="left:279.00px;top:765.77px;font-size:11.5px;color:#555;font-weight:normal;letter-spacing:0px;transform:scaleX(0.9522);">Composant</div>
<div class="t" style="left:410.00px;top:765.77px;font-size:11.5px;color:#555;font-weight:normal;letter-spacing:0px;transform:scaleX(0.9719);">Formule</div>
<div class="t" style="left:541.00px;top:765.77px;font-size:11.5px;color:#555;font-weight:normal;letter-spacing:0px;transform:scaleX(1.0118);">Famille</div>
<div class="t" style="left:672.30px;top:765.77px;font-size:11.5px;color:#555;font-weight:normal;letter-spacing:0px;">Perte</div>
<div class="t" style="left:778.30px;top:765.77px;font-size:11.5px;color:#555;font-weight:normal;letter-spacing:0px;transform:scaleX(0.9566);">Position_Comp</div>
<div class="t" style="left:930.00px;top:765.77px;font-size:11.5px;color:#555;font-weight:normal;letter-spacing:0px;transform:scaleX(0.9582);">Hors_Prx_Vte</div>
<div class="t" style="left:1073.30px;top:765.77px;font-size:11.5px;color:#555;font-weight:normal;letter-spacing:0px;transform:scaleX(0.9596);">Style_Coupe</div>
<div class="a" style="left:172px;top:759px;width:1px;height:23px;background:#d0d0d0"></div>
<div class="a" style="left:274px;top:759px;width:1px;height:23px;background:#d0d0d0"></div>
<div class="a" style="left:405px;top:759px;width:1px;height:23px;background:#d0d0d0"></div>
<div class="a" style="left:536px;top:759px;width:1px;height:23px;background:#d0d0d0"></div>
<div class="a" style="left:667px;top:759px;width:1px;height:23px;background:#d0d0d0"></div>
<div class="a" style="left:773px;top:759px;width:1px;height:23px;background:#d0d0d0"></div>
<div class="a" style="left:925px;top:759px;width:1px;height:23px;background:#d0d0d0"></div>
<div class="a" style="left:1068px;top:759px;width:1px;height:23px;background:#d0d0d0"></div>
<svg class="a" style="left:159px;top:765px" width="8" height="8" viewBox="0 0 8 8"><path d="M0.7 0.7h6.6L4.8 3.8V7.3H3.2V3.8z" fill="none" stroke="#777" stroke-width="1.1"/></svg>
<svg class="a" style="left:262px;top:765px" width="8" height="8" viewBox="0 0 8 8"><path d="M0.7 0.7h6.6L4.8 3.8V7.3H3.2V3.8z" fill="none" stroke="#777" stroke-width="1.1"/></svg>
<svg class="a" style="left:392px;top:765px" width="8" height="8" viewBox="0 0 8 8"><path d="M0.7 0.7h6.6L4.8 3.8V7.3H3.2V3.8z" fill="none" stroke="#777" stroke-width="1.1"/></svg>
<svg class="a" style="left:523px;top:765px" width="8" height="8" viewBox="0 0 8 8"><path d="M0.7 0.7h6.6L4.8 3.8V7.3H3.2V3.8z" fill="none" stroke="#777" stroke-width="1.1"/></svg>
<svg class="a" style="left:654px;top:765px" width="8" height="8" viewBox="0 0 8 8"><path d="M0.7 0.7h6.6L4.8 3.8V7.3H3.2V3.8z" fill="none" stroke="#777" stroke-width="1.1"/></svg>
<svg class="a" style="left:760px;top:765px" width="8" height="8" viewBox="0 0 8 8"><path d="M0.7 0.7h6.6L4.8 3.8V7.3H3.2V3.8z" fill="none" stroke="#777" stroke-width="1.1"/></svg>
<svg class="a" style="left:912px;top:765px" width="8" height="8" viewBox="0 0 8 8"><path d="M0.7 0.7h6.6L4.8 3.8V7.3H3.2V3.8z" fill="none" stroke="#777" stroke-width="1.1"/></svg>
<svg class="a" style="left:1055px;top:765px" width="8" height="8" viewBox="0 0 8 8"><path d="M0.7 0.7h6.6L4.8 3.8V7.3H3.2V3.8z" fill="none" stroke="#777" stroke-width="1.1"/></svg>
<svg class="a" style="left:1190px;top:765px" width="8" height="8" viewBox="0 0 8 8"><path d="M0.7 0.7h6.6L4.8 3.8V7.3H3.2V3.8z" fill="none" stroke="#777" stroke-width="1.1"/></svg>
<div class="a" style="left:1216px;top:738px;width:690px;height:374px;background:#fff;border:1px solid #646464"></div>
<svg class="a" style="left:1229px;top:749px" width="10" height="2" viewBox="0 0 10 2"><path d="M0 0.5h10" stroke="#666" stroke-width="1" stroke-dasharray="1 1"/></svg>
<div class="t" style="left:1241.00px;top:742.30px;font-size:15px;color:#000;font-weight:normal;letter-spacing:0px;transform:scaleX(0.9822);">ZPorteAffiche</div>
<div class="a" style="left:23px;top:1121px;width:209px;height:41px;background:#f4f4f4;border:1px solid #b8b8b8;box-shadow:inset 0 0 0 1px #dedede"></div>
<div class="t" style="left:99.50px;top:1134.18px;font-size:15.5px;color:#3a3a3a;font-weight:normal;letter-spacing:0px;transform:scaleX(0.9497);">Enregistrer</div>
<svg class="a" style="left:33px;top:1134px" width="16" height="15" viewBox="0 0 16 15"><path d="M0 0h11.5L15 3.5V15H0z" fill="#1a7fb5"/><rect x="3" y="1.5" width="7" height="4.5" fill="#9ec9e3"/><rect x="6.5" y="2" width="2" height="3" fill="#fff"/><rect x="3.5" y="9" width="8" height="4.5" fill="#fff"/></svg>
<div class="a" style="left:246px;top:1121px;width:209px;height:41px;background:#f4f4f4;border:1px solid #b8b8b8;box-shadow:inset 0 0 0 1px #dedede"></div>
<div class="t" style="left:333.50px;top:1134.18px;font-size:15.5px;color:#3a3a3a;font-weight:normal;letter-spacing:0px;transform:scaleX(0.9357);">Annuler</div>
<svg class="a" style="left:254px;top:1133px" width="18" height="17" viewBox="0 0 18 17"><path d="M4.2 4.5A6.5 6.5 0 1 1 3 11" fill="none" stroke="#d9232d" stroke-width="2.3"/><path d="M1 1.5v6h6z" fill="#d9232d"/></svg>
<div class="a" style="left:469px;top:1121px;width:209px;height:41px;background:#f4f4f4;border:1px solid #b8b8b8;box-shadow:inset 0 0 0 1px #dedede"></div>
<div class="t" style="left:552.00px;top:1134.18px;font-size:15.5px;color:#3a3a3a;font-weight:normal;letter-spacing:0px;transform:scaleX(0.9509);">Nouveau</div>
<svg class="a" style="left:478px;top:1133px" width="17" height="17" viewBox="0 0 17 17"><path d="M8.5 0.5v16M0.5 8.5h16" stroke="#1e9e3e" stroke-width="4"/></svg>
<div class="a" style="left:691px;top:1121px;width:209px;height:41px;background:#f4f4f4;border:1px solid #b8b8b8;box-shadow:inset 0 0 0 1px #dedede"></div>
<div class="t" style="left:769.50px;top:1134.18px;font-size:15.5px;color:#3a3a3a;font-weight:normal;letter-spacing:0px;transform:scaleX(0.9510);">Supprimer</div>
<svg class="a" style="left:702px;top:1133px" width="14" height="16" viewBox="0 0 14 16"><path d="M4.5 2V0.8h5V2H13.5v2.2H0.5V2z" fill="#000"/><path d="M1.5 5h11l-0.8 10.5H2.3z" fill="#000"/><path d="M4.8 6.5v7.5M7 6.5v7.5M9.2 6.5v7.5" stroke="#fff" stroke-width="1"/></svg>
<div class="a" style="left:1698px;top:1121px;width:209px;height:41px;background:#f4f4f4;border:1px solid #b8b8b8;box-shadow:inset 0 0 0 1px #dedede"></div>
<div class="t" style="left:1786.75px;top:1134.18px;font-size:15.5px;color:#3a3a3a;font-weight:normal;letter-spacing:0px;transform:scaleX(0.9509);">Fermer</div>
<svg class="a" style="left:1706px;top:1133px" width="18" height="17" viewBox="0 0 18 17"><path d="M2.5 2.5l13 12M15.5 2.5l-13 12" stroke="#e3202a" stroke-width="3.4" stroke-linecap="round"/></svg>
<div class="a" style="left:1919px;top:22px;width:1px;height:119px;background:#b0b0b0"></div>
<div class="a" style="left:1918px;top:165px;width:1px;height:1008px;background:#fff"></div>
<div class="a" style="left:2px;top:165px;width:1px;height:1008px;background:#fff"></div>
<div class="a" style="left:1919px;top:163px;width:1px;height:1012px;background:#3a3a3a"></div>
<div class="a" style="left:2px;top:1172px;width:1917px;height:1px;background:#fff"></div>
<div class="a" style="left:0px;top:1173px;width:1920px;height:2px;background:#3c3c3c"></div>
</body></html>
